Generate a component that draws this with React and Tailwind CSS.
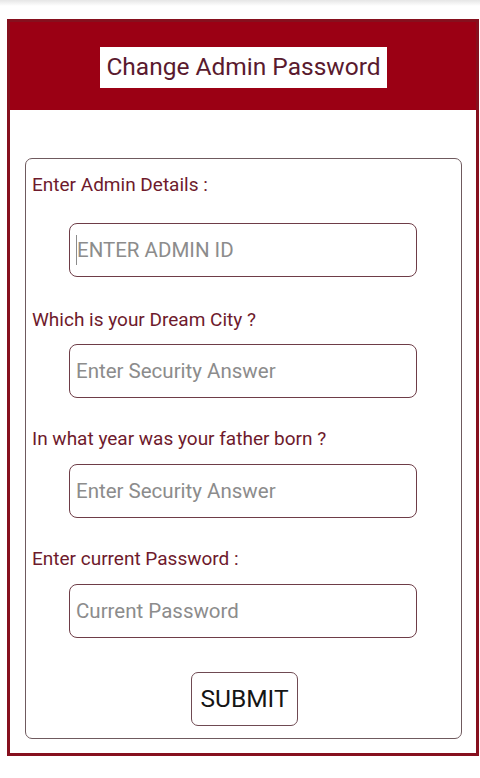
export default function App() {
  const font = { fontFamily: "Roboto, 'Noto Sans', sans-serif" };
  const inputCls =
    "ml-[43px] w-[348px] h-[54px] rounded-[8px] border-[1.5px] border-[#6e3d47] flex items-center pl-[6px] text-[20.5px] text-[#8c8c8c]";
  const labelCls = "pl-[6px] h-[24px] leading-[24px] text-[19px] text-[#6e1a2c]";
  return (
    <div className="w-[480px] h-[778px] bg-white relative overflow-hidden" style={font}>
      <div className="h-[6px] bg-gradient-to-b from-[#e6e6e6] to-white" />
      <div className="ml-[7px] mt-[13px] w-[472px] border-[3px] border-[#86101e] bg-white">
        <div className="h-[88px] bg-[#9b0014] flex items-center justify-center pt-[2px]">
          <div className="h-[41px] px-[6px] bg-white flex items-center text-[24.5px] text-[#5a1a2e] ml-[1px]">
            Change Admin Password
          </div>
        </div>
        <div className="pt-[48px] pl-[15px] pr-[14px] pb-[14px]">
          <div className="rounded-[7px] border-[1.5px] border-[#6f5a5e] pt-[14px] pb-[12px]">
            <div className={labelCls}>Enter Admin Details :</div>
            <div className={inputCls + " mt-[26px]"}>
              <span className="w-[1px] h-[30px] bg-[#8c8c8c]" />
              ENTER ADMIN ID
            </div>
            <div className={labelCls + " mt-[31px]"}>Which is your Dream City ?</div>
            <div className={inputCls + " mt-[12px]"}>Enter Security Answer</div>
            <div className={labelCls + " mt-[29px]"}>In what year was your father born ?</div>
            <div className={inputCls + " mt-[13px]"}>Enter Security Answer</div>
            <div className={labelCls + " mt-[29px]"}>Enter current Password :</div>
            <div className={inputCls + " mt-[13px]"}>Current Password</div>
            <div className="flex justify-center mt-[34px] pl-[2px]">
              <div className="w-[107px] h-[54px] rounded-[7px] border-[1.5px] border-[#6f4a52] flex items-center justify-center text-[24.5px] text-[#151515]">
                SUBMIT
              </div>
            </div>
          </div>
        </div>
      </div>
    </div>
  );
}
